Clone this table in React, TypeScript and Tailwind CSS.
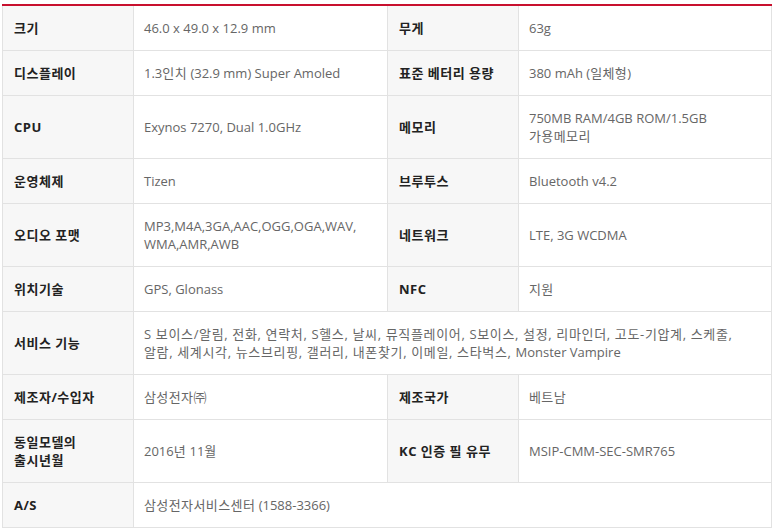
import React from 'react';

type Cell = { label: React.ReactNode; value: React.ReactNode };

// hangul in the source renders a little wider than Noto CJK, so loosen it slightly
const K = ({ children }: { children: React.ReactNode }) => (
    <span className="tracking-[0.4px]">{children}</span>
);

const rows: (Cell[])[] = [
    [
        { label: '크기', value: '46.0 x 49.0 x 12.9 mm' },
        { label: '무게', value: '63g' },
    ],
    [
        { label: '디스플레이', value: <>1.3<K>인치</K> (32.9 mm) Super Amoled</> },
        { label: '표준 베터리 용량', value: <>380 mAh (<K>일체형</K>)</> },
    ],
    [
        { label: 'CPU', value: 'Exynos 7270, Dual 1.0GHz' },
        { label: '메모리', value: <>750MB RAM/4GB ROM/1.5GB<br /><K>가용메모리</K></> },
    ],
    [
        { label: '운영체제', value: 'Tizen' },
        { label: '브루투스', value: 'Bluetooth v4.2' },
    ],
    [
        { label: '오디오 포맷', value: <>MP3,M4A,3GA,AAC,OGG,OGA,WAV,<br />WMA,AMR,AWB</> },
        { label: '네트워크', value: 'LTE, 3G WCDMA' },
    ],
    [
        { label: '위치기술', value: 'GPS, Glonass' },
        { label: 'NFC', value: <K>지원</K> },
    ],
    [
        {
            label: '서비스 기능',
            value: (
                <span className="tracking-[0.65px]">
                    S 보이스/알림, 전화, 연락처, S헬스, 날씨, 뮤직플레이어, S보이스, 설정, 리마인더, 고도-기압계, 스케줄,
                    <br />
                    알람, 세계시각, 뉴스브리핑, 갤러리, 내폰찾기, 이메일, 스타벅스, <span className="tracking-normal">Monster Vampire</span>
                </span>
            ),
        },
    ],
    [
        { label: '제조자/수입자', value: <K>삼성전자㈜</K> },
        { label: '제조국가', value: <K>베트남</K> },
    ],
    [
        { label: <>동일모델의<br />출시년월</>, value: <>2016<K>년</K> 11<K>월</K></> },
        { label: 'KC 인증 필 유무', value: 'MSIP-CMM-SEC-SMR765' },
    ],
    [
        { label: 'A/S', value: <><K>삼성전자서비스센터</K> (1588-3366)</> },
    ],
];

const th = 'bg-[#f7f7f7] border border-[#e2e2e2] pl-[11px] pr-2 py-[13px] text-left align-middle font-bold text-[#222] tracking-[0.5px]';
const td = 'bg-white border border-[#e2e2e2] pl-[10px] pr-2 py-[13px] text-left align-middle font-normal text-[#666]';

export default function App() {
    return (
        <div className="bg-white w-[777px] h-[532px] pt-[4px] pl-[2px] font-['Open_Sans','Noto_Sans_CJK_KR',sans-serif] text-[13px] leading-[18px]">
            <table className="w-[770px] table-fixed border-collapse border-t-2 border-t-[#c8102e]">
                <colgroup>
                    <col className="w-[131px]" />
                    <col className="w-[254px]" />
                    <col className="w-[131px]" />
                    <col />
                </colgroup>
                <tbody>
                    {rows.map((row, i) => (
                        <tr key={i}>
                            {row.map((cell, j) => (
                                <React.Fragment key={j}>
                                    <th className={th}>{cell.label}</th>
                                    <td className={td} colSpan={row.length === 1 ? 3 : 1}>
                                        {cell.value}
                                    </td>
                                </React.Fragment>
                            ))}
                        </tr>
                    ))}
                </tbody>
            </table>
        </div>
    );
}
